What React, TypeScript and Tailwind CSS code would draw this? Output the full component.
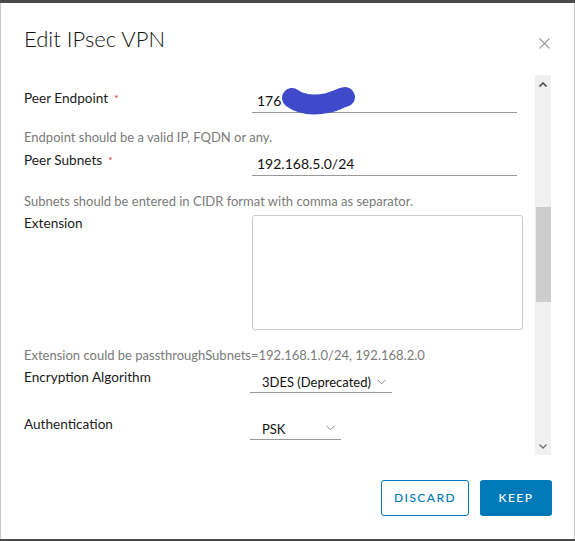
import React from "react";

const font = { fontFamily: "Lato, 'Open Sans', sans-serif" };

function Chevron({ className = "" }: { className?: string }) {
  return (
    <svg width="9" height="6" viewBox="0 0 9 6" className={className}>
      <path d="M0.5 0.8 L4.5 4.8 L8.5 0.8" fill="none" stroke="#8c8c8c" strokeWidth="1" />
    </svg>
  );
}

function Label({ text, required }: { text: string; required?: boolean }) {
  return (
    <div className="w-[228px] shrink-0 text-[13.6px] leading-[16px] text-[#1b1b1b]">
      {text}
      {required && <span className="ml-[6px] text-[10px] align-top text-[#e02020]">*</span>}
    </div>
  );
}

function Help({ text }: { text: string }) {
  return <div className="text-[13px] leading-[16px] text-[#7a7a7a]">{text}</div>;
}

export default function App() {
  return (
    <div
      className="w-[575px] h-[541px] flex flex-col bg-white border-t-[3px] border-b-[2px] border-[#4a4a4a] overflow-hidden"
      style={font}
    >
      <div className="flex-1 flex flex-col border-l border-l-[#c8c8c8] border-r border-r-[#c8c8c8]">
        {/* header */}
        <div className="h-[72px] flex items-start justify-between pl-[23px] pr-[24px] pt-[22px]">
          <div className="text-[22px] leading-[28px] font-light text-[#111]">Edit IPsec VPN</div>
          <svg width="11" height="11" viewBox="0 0 11 11" className="mt-[13px]">
            <path d="M0.5 0.5 L10.5 10.5 M10.5 0.5 L0.5 10.5" stroke="#9a9a9a" strokeWidth="1.1" />
          </svg>
        </div>

        {/* body */}
        <div className="h-[380px] flex pr-[23px]">
          <div className="flex-1 pl-[23px] pr-[12px] pt-[13px]">
            {/* Peer Endpoint */}
            <div className="flex items-start">
              <div className="pt-[2px]">
                <Label text="Peer Endpoint" required />
              </div>
              <div className="relative w-[265px] h-[25px] border-b border-[#9a9a9a] pl-[5px] flex items-center text-[14px] text-[#111]">
                176
                <svg
                  width="80"
                  height="30"
                  viewBox="0 0 80 30"
                  className="absolute left-[30px] top-[-2px]"
                >
                  <path
                    d="M10 12 C18 18, 30 20, 46 17 C54 15, 58 12, 63 11"
                    fill="none"
                    stroke="#3f4acb"
                    strokeWidth="20"
                    strokeLinecap="round"
                  />
                </svg>
              </div>
            </div>
            <div className="mt-[16px]">
              <Help text="Endpoint should be a valid IP, FQDN or any." />
            </div>

            {/* Peer Subnets */}
            <div className="flex items-start mt-[6px]">
              <div className="pt-[1px]">
                <Label text="Peer Subnets" required />
              </div>
              <div className="w-[265px] h-[25px] border-b border-[#9a9a9a] pl-[5px] flex items-center text-[14px] text-[#111]">
                192.168.5.0/24
              </div>
            </div>
            <div className="mt-[17px]">
              <Help text="Subnets should be entered in CIDR format with comma as separator." />
            </div>

            {/* Extension */}
            <div className="flex items-start mt-[6px]">
              <div className="pt-[0px]">
                <Label text="Extension" />
              </div>
              <div className="w-[271px] h-[115px] border border-[#c8c8c8] rounded-[3px]" />
            </div>
            <div className="mt-[17px]">
              <Help text="Extension could be passthroughSubnets=192.168.1.0/24, 192.168.2.0" />
            </div>

            {/* Encryption */}
            <div className="flex items-start mt-[6px]">
              <Label text="Encryption Algorithm" />
              <div className="-ml-[2px] w-[142px] h-[24px] border-b border-[#9a9a9a] pl-[12px] pr-[6px] pt-[4px] flex items-center justify-between text-[13px] text-[#111]">
                <span>3DES (Deprecated)</span>
                <Chevron className="mb-[2px]" />
              </div>
            </div>

            {/* Authentication */}
            <div className="flex items-start mt-[23px]">
              <Label text="Authentication" />
              <div className="-ml-[2px] w-[91px] h-[24px] border-b border-[#9a9a9a] pl-[12px] pr-[6px] pt-[5px] flex items-center justify-between text-[13px] text-[#111]">
                <span>PSK</span>
                <Chevron className="mb-[4px]" />
              </div>
            </div>
          </div>

          {/* scrollbar */}
          <div className="w-[16px] bg-[#f0f0f0] flex flex-col items-center">
            <div className="h-[16px] flex items-center justify-center mt-[1px]">
              <svg width="8" height="5" viewBox="0 0 8 5">
                <path d="M0.5 4.5 L4 1 L7.5 4.5" fill="none" stroke="#505050" strokeWidth="1.6" />
              </svg>
            </div>
            <div className="mt-[115px] w-[15px] h-[95px] bg-[#cdcdcd]" />
            <div className="flex-1" />
            <div className="h-[16px] flex items-center justify-center mb-[1px]">
              <svg width="8" height="5" viewBox="0 0 8 5">
                <path d="M0.5 0.5 L4 4 L7.5 0.5" fill="none" stroke="#707070" strokeWidth="1.4" />
              </svg>
            </div>
          </div>
        </div>

        {/* footer */}
        <div className="flex-1 flex items-start justify-end pr-[22px] pt-[25px] gap-[11px]">
          <button className="w-[88px] h-[36px] rounded-[3px] border border-[#0079b8] text-[#0079b8] text-[12px] font-medium tracking-[0.12em] bg-white">
            DISCARD
          </button>
          <button className="w-[72px] h-[36px] rounded-[3px] bg-[#0079b8] text-white text-[12px] font-medium tracking-[0.12em]">
            KEEP
          </button>
        </div>
      </div>
    </div>
  );
}
